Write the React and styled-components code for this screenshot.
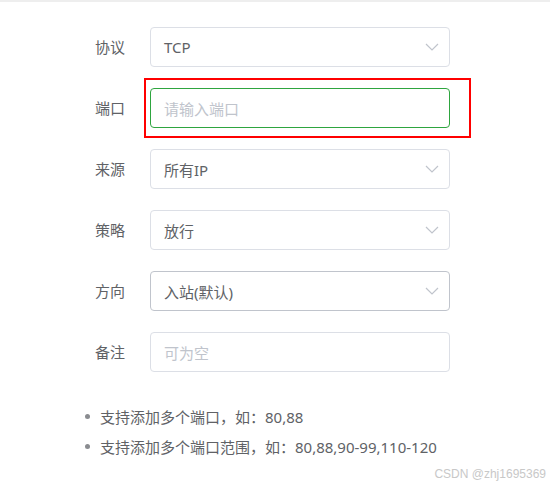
import React from "react";
import styled, { createGlobalStyle } from "styled-components";

const Global = createGlobalStyle`
  html, body { margin: 0; padding: 0; background: #fff; }
  body { font-family: "Noto Sans", "Noto Sans CJK SC", sans-serif; }
`;

const Page = styled.div`
  position: relative;
  width: 550px;
  height: 486px;
  box-sizing: border-box;
  border-top: 2px solid #eeeeee;
  overflow: hidden;
`;

const Form = styled.div`
  display: flex;
  flex-direction: column;
  gap: 21px;
  padding: 25px 0 0 95px;
`;

const Row = styled.div`
  display: flex;
  align-items: center;
  height: 40px;
`;

const Label = styled.div`
  width: 55px;
  font-size: 15px;
  color: #606266;
  line-height: 40px;
`;

const FieldWrap = styled.div`
  position: relative;
  width: 300px;
  height: 40px;
`;

const Field = styled.div`
  box-sizing: border-box;
  width: 300px;
  height: 40px;
  display: flex;
  align-items: center;
  justify-content: space-between;
  padding: 0 10px 0 13px;
  border: 1px solid ${(p) => p.$border || "#dcdfe6"};
  border-radius: 4px;
  background: #fff;
  font-size: 15px;
  color: ${(p) => (p.$placeholder ? "#c0c4cc" : "#606266")};
`;

const Annotation = styled.div`
  position: absolute;
  left: -6px;
  top: -10px;
  width: 327px;
  height: 60px;
  box-sizing: border-box;
  border: 2px solid #ff0000;
  pointer-events: none;
`;

const Tips = styled.ul`
  list-style: none;
  margin: 29px 0 0 0;
  padding: 0 0 0 85px;
`;

const Tip = styled.li`
  display: flex;
  align-items: center;
  height: 30px;
  font-size: 15px;
  color: #606266;
  &::before {
    content: "";
    width: 5px;
    height: 5px;
    border-radius: 50%;
    background: #8a8c90;
    margin-right: 10px;
  }
`;

const Watermark = styled.div`
  position: absolute;
  right: 4px;
  bottom: 5px;
  font-family: "Liberation Sans", Arial, sans-serif;
  font-size: 12px;
  color: #c8c8c8;
`;

const Chevron = () => (
  <svg width="14" height="8" viewBox="0 0 14 8">
    <polyline points="1,1 7,7 13,1" fill="none" stroke="#c0c4cc" strokeWidth="1.2" />
  </svg>
);

const rows = [
  { label: "协议", value: "TCP", select: true },
  { label: "端口", value: "请输入端口", placeholder: true, border: "#2ea53f", marked: true },
  { label: "来源", value: "所有IP", select: true },
  { label: "策略", value: "放行", select: true },
  { label: "方向", value: "入站(默认)", select: true, border: "#c0c4cc" },
  { label: "备注", value: "可为空", placeholder: true },
];

export default function App() {
  return (
    <Page>
      <Global />
      <Form>
        {rows.map((r) => (
          <Row key={r.label}>
            <Label>{r.label}</Label>
            <FieldWrap>
              <Field $border={r.border} $placeholder={r.placeholder}>
                <span>{r.value}</span>
                {r.select && <Chevron />}
              </Field>
              {r.marked && <Annotation />}
            </FieldWrap>
          </Row>
        ))}
      </Form>
      <Tips>
        <Tip>支持添加多个端口，如：80,88</Tip>
        <Tip>支持添加多个端口范围，如：80,88,90-99,110-120</Tip>
      </Tips>
      <Watermark>CSDN @zhj1695369</Watermark>
    </Page>
  );
}
